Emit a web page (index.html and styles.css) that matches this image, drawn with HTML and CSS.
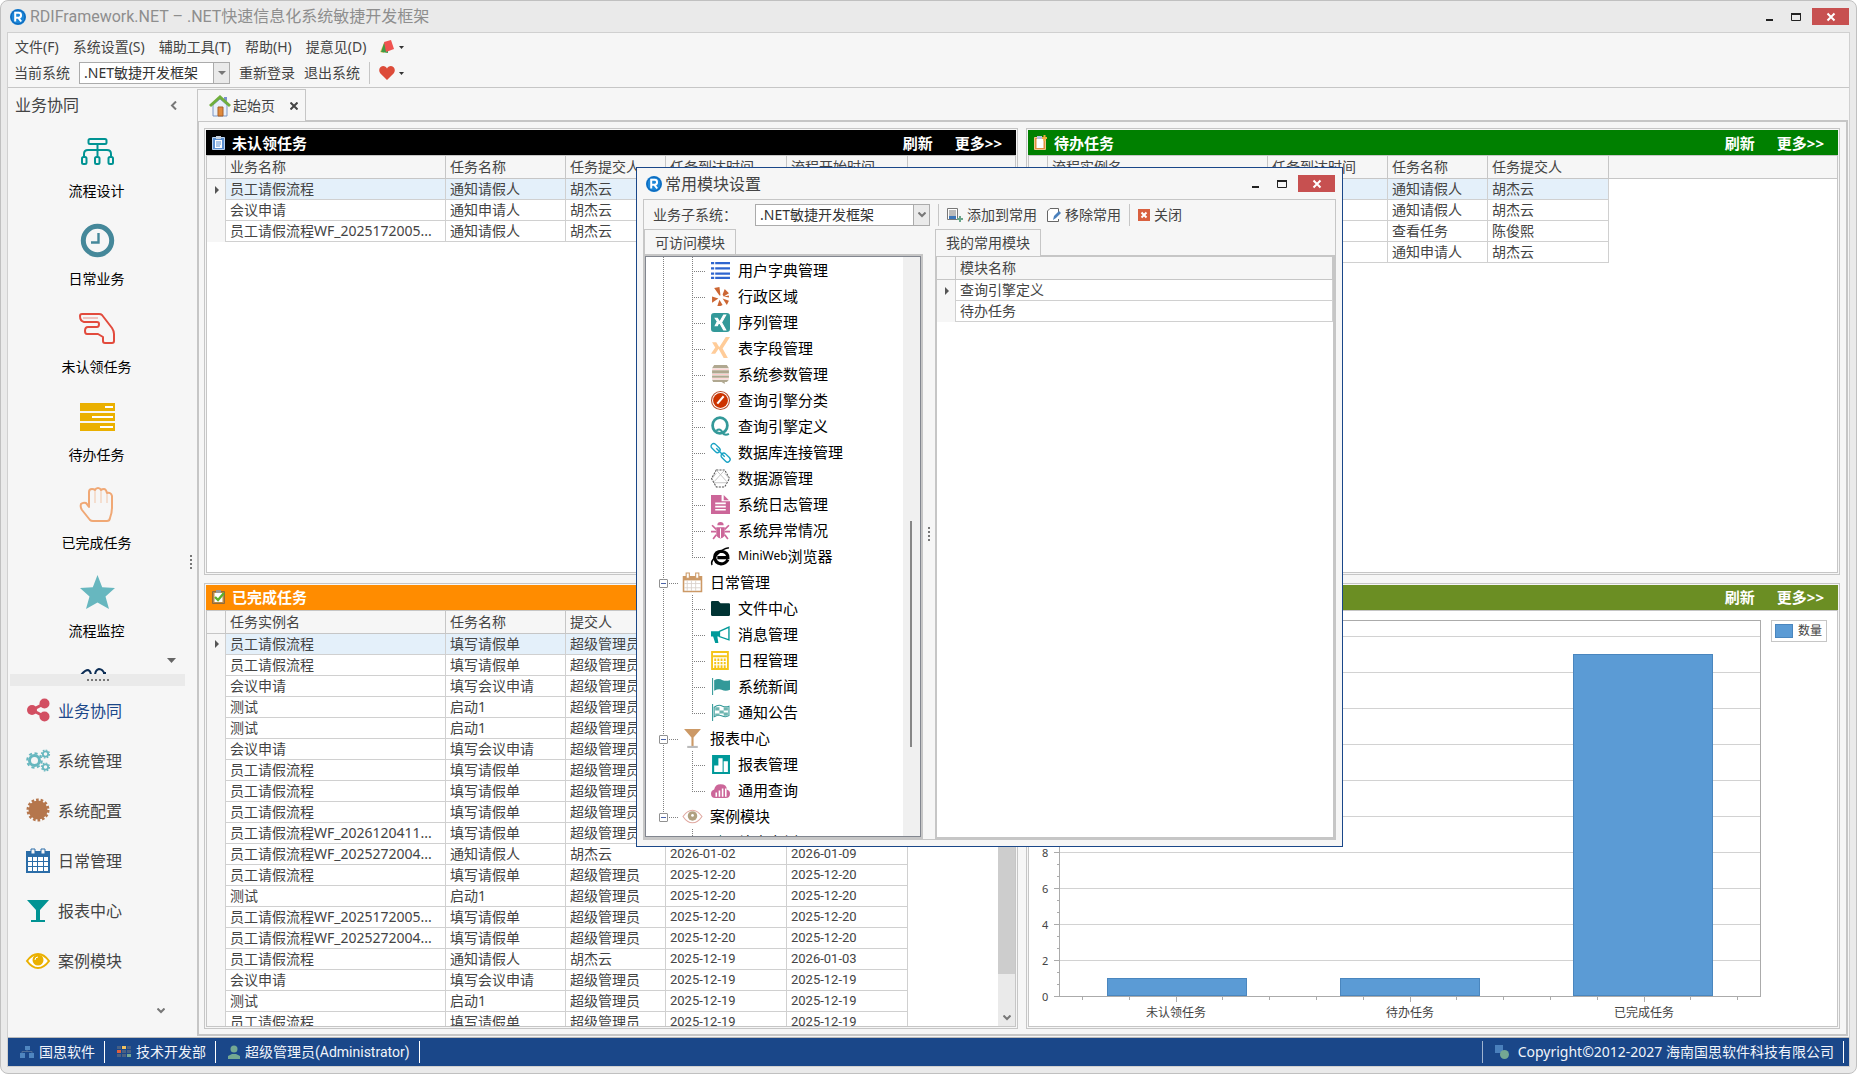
FILE: index.html
```html
<!DOCTYPE html>
<html lang="zh-CN">
<head>
  <meta charset="UTF-8">
  <meta name="viewport" content="width=device-width, initial-scale=1.0">
  <title>RDIFramework.NET</title>
  <link rel="stylesheet" href="styles.css">
</head>
<body>
  <div class="window">
    <header class="titlebar">
      <svg class="logo" viewBox="0 0 16 16"><circle cx="8" cy="8" r="8" fill="#1b86d8"/><circle cx="8" cy="8" r="7" fill="none" stroke="#0d62b4" stroke-width="1"/><path d="M5.2 12.5V3.8h3.4a2.4 2.4 0 0 1 0 4.9H5.2M8.2 8.7l3 3.8" fill="none" stroke="#fff" stroke-width="2"/></svg>
      <h1>RDIFramework.NET – .NET快速信息化系统敏捷开发框架</h1>
      <div class="win-buttons">
        <button aria-label="最小化"><svg viewBox="0 0 10 10"><path d="M1 7h7v2H1z" fill="#222"/></svg></button>
        <button aria-label="最大化"><svg viewBox="0 0 10 10"><path d="M.5 1.5h9v7h-9z" fill="none" stroke="#222"/><path d="M0 1h10v2H0z" fill="#222"/></svg></button>
        <button class="close" aria-label="关闭"><svg viewBox="0 0 10 10"><path d="M1.5 1.5l7 7M8.5 1.5l-7 7" stroke="#fff" stroke-width="2"/></svg></button>
      </div>
    </header>

    <div class="frame">
      <nav class="menubar">
        <button>文件(F)</button>
        <button>系统设置(S)</button>
        <button>辅助工具(T)</button>
        <button>帮助(H)</button>
        <button>提意见(D)</button>
        <button class="pick" aria-label="皮肤">
          <svg width="15" height="14" viewBox="0 0 15 14"><path d="M4 3L0 12l4 1z" fill="#f3c86a"/><path d="M4 3L1 12l7 1V4z" fill="#3f9b46"/><path d="M4 2l7-2 3 9-8 3z" fill="#ef5350"/></svg>
          <svg width="5" height="3" viewBox="0 0 5 3"><path d="M0 0h5L2.500 3z" fill="#333"/></svg>
        </button>
      </nav>
      <div class="toolbar">
        <label for="system">当前系统</label>
        <div class="combo combo-main">
          <select id="system"><option>.NET敏捷开发框架</option></select>
          <span class="combo-arrow"><svg width="8" height="4" viewBox="0 0 8 4"><path d="M0 0h8L4 4z" fill="#777"/></svg></span>
        </div>
        <button>重新登录</button>
        <button>退出系统</button>
        <span class="sep"></span>
        <button class="pick" aria-label="收藏">
          <svg width="16" height="14" viewBox="0 0 16 14"><path d="M8 14L1.200 7.300C-.8 4.800.2.200 4 0c2 0 3.300 1 4 2.400C8.700 1 10 0 12 0c3.800.2 4.800 4.800 2.800 7.300z" fill="#dd4b39"/></svg>
          <svg width="5" height="3" viewBox="0 0 5 3"><path d="M0 0h5L2.500 3z" fill="#333"/></svg>
        </button>
      </div>

      <div class="content">
        <aside class="sidebar">
          <div class="side-main">
            <div class="side-title">
              <span>业务协同</span>
              <button aria-label="收起"><svg width="7" height="9" viewBox="0 0 7 9"><path d="M6 .5l-4 4 4 4" fill="none" stroke="#777" stroke-width="2"/></svg></button>
            </div>
            <div class="side-list">
              <a href="#" class="side-item">
                <svg viewBox="0 0 34 34" fill="none" stroke="#009393" stroke-width="2"><rect x="8.500" y="4" width="18" height="5" rx="1.500"/><path d="M17.500 9v12M4 22v-3q0-4 4-4h19q4 0 4 4v3"/><rect x="2" y="22" width="4.500" height="7" rx="1.500"/><rect x="15" y="22" width="4.500" height="7" rx="1.500"/><rect x="28.500" y="22" width="4.500" height="7" rx="1.500"/></svg>
                <span>流程设计</span>
              </a>
              <a href="#" class="side-item">
                <svg viewBox="0 0 34 34" fill="none" stroke="#45889a"><circle cx="17.500" cy="17.500" r="14.200" stroke-width="5"/><path d="M18.500 10v9.500H11" stroke-width="2.400"/></svg>
                <span>日常业务</span>
              </a>
              <a href="#" class="side-item">
                <svg viewBox="0 0 34 34" fill="none" stroke="#e24b3d" stroke-width="2" stroke-linejoin="round"><path d="M2 3h17q2 0 3 1l10 13q2 3 2 6v7q0 2-2 2h-7q-2 0-2-2v-4l-5-3H7q-2 0-2-3 0-4 3-4h9q2 0 2-3 0-2-2-2H4Q0 10 0 5q0-2 2-2z"/><path d="M3 7h15" stroke-width="1" opacity=".6"/></svg>
                <span>未认领任务</span>
              </a>
              <a href="#" class="side-item">
                <svg viewBox="0 0 34 34" fill="#eab000"><path d="M0 4h35v8H0zM0 14h35v8H0zM0 24h35v8H0z"/><path d="M25 7h8v2h-8zM12 17h21v2H12zM20 27h13v2H20z" fill="#fff"/></svg>
                <span>待办任务</span>
              </a>
              <a href="#" class="side-item">
                <svg viewBox="0 0 34 34" fill="none" stroke="#f0a875" stroke-width="2" stroke-linejoin="round"><path d="M9 20V5q0-3 3-3 2 0 3 1 1-2 3-2t3 2q1-1 3-1 2 0 3 4 4-1 5 3v11q0 6-2 11-.5 3-3 3H13q-2 0-3-1L2 23q-2-3-1-6 2-2 5-1 1 1 3 4z"/><path d="M15 4v12M21 4v12M27 7v9" stroke-width="1" opacity=".6"/></svg>
                <span>已完成任务</span>
              </a>
              <a href="#" class="side-item">
                <svg viewBox="0 0 34 34" fill="#67b7bf"><path d="M17.500 0l4.700 12.200L35 13l-9.500 8.500L29 34l-11.500-6.500L6 34l3.500-12.500L0 13l12.800-.8z"/></svg>
                <span>流程监控</span>
              </a>
              <a href="#" class="side-item" aria-label="更多模块">
                <svg viewBox="0 0 34 34" fill="none" stroke="#0c2d55" stroke-width="2"><path d="M1 12q4-5 7-5 3 1 3 6v10M25 12q-2-6-6-6-4 1-4 7M23 10h3"/></svg>
              </a>
            </div>
            <div class="side-more"><svg width="9" height="5" viewBox="0 0 9 5"><path d="M0 0h9L4.500 5z" fill="#666"/></svg></div>
            <div class="side-split"></div>
            <div class="side-groups">
              <a href="#" class="group active">
                <svg viewBox="0 0 24 24" fill="#d24f62"><circle cx="6" cy="11" r="5"/><circle cx="18.500" cy="4.500" r="5"/><circle cx="18.500" cy="17.500" r="5"/><path d="M18.500 4.500L6 11l12.500 6.500" fill="none" stroke="#d24f62" stroke-width="3"/></svg>
                业务协同</a>
              <a href="#" class="group">
                <svg viewBox="0 0 24 24" fill="none" stroke="#67b7bf"><circle cx="8.500" cy="11.500" r="5" stroke-width="3"/><circle cx="8.500" cy="11.500" r="7.300" stroke-width="2" stroke-dasharray="3.100 2.600"/><circle cx="19.500" cy="5" r="2.700" stroke-width="1.800"/><circle cx="19.500" cy="5" r="4" stroke-width="1.200" stroke-dasharray="1.700 1.400"/><circle cx="19.500" cy="18" r="2.700" stroke-width="1.800"/><circle cx="19.500" cy="18" r="4" stroke-width="1.200" stroke-dasharray="1.700 1.400"/></svg>
                系统管理</a>
              <a href="#" class="group">
                <svg viewBox="0 0 24 24"><circle cx="12" cy="11" r="9.500" fill="#b5764c"/><circle cx="12" cy="11" r="10" fill="none" stroke="#b5764c" stroke-width="3" stroke-dasharray="2.600 1.890"/></svg>
                系统配置</a>
              <a href="#" class="group">
                <svg viewBox="0 0 24 24"><path d="M0 2h24v22H0z" fill="#2b6da8"/><path d="M2 8h4v4H2zM7 8h4v4H7zM12 8h5v4h-5zM18 8h4v4h-4zM2 13h4v4H2zM7 13h4v4H7zM12 13h5v4h-5zM18 13h4v4h-4zM2 18h4v4H2zM7 18h4v4H7zM12 18h5v4h-5zM18 18h4v4h-4z" fill="#fff"/><path d="M5 0h4v5H5zM15 0h4v5h-4z" fill="#f6f6f6" stroke="#2b6da8"/></svg>
                日常管理</a>
              <a href="#" class="group">
                <svg viewBox="0 0 24 24" fill="#009393"><path d="M1 1h22l-9 10v10h5v2H5v-2h5V11z"/></svg>
                报表中心</a>
              <a href="#" class="group">
                <svg viewBox="0 0 24 24"><path d="M1 12q5-7 11-7t11 7q-5 7-11 7T1 12z" fill="#fff" stroke="#eab000" stroke-width="2"/><circle cx="12" cy="11" r="5.500" fill="#eab000"/><path d="M9 11q0-3 3-3" fill="none" stroke="#fff"/></svg>
                案例模块</a>
            </div>
            <div class="side-foot"><svg width="8" height="6" viewBox="0 0 8 6"><path d="M.5.5L4 4 7.500.5" fill="none" stroke="#777" stroke-width="2"/></svg></div>
          </div>
          <div class="grip"></div>
        </aside>

        <main class="main">
          <div class="tabs">
            <div class="tab">
              <svg width="22" height="22" viewBox="0 0 22 22"><path d="M4 10v11h14V10l-7-6z" fill="#e8effa" stroke="#7d97c4"/><path d="M15 2h3v5h-3z" fill="#7b8fd0"/><path d="M1 11L11 2l10 9" fill="none" stroke="#6fae3c" stroke-width="3"/><path d="M9 12h5v9H9z" fill="#e08a3c" stroke="#a7602a"/></svg>
              <span>起始页</span>
              <button aria-label="关闭标签"><svg width="8" height="8" viewBox="0 0 8 8"><path d="M.5.5l7 7M7.500.5l-7 7" stroke="#444" stroke-width="2"/></svg></button>
            </div>
            <div class="tab-fill"></div>
          </div>

          <div class="board">
            <section class="panel">
              <div class="panel-head black">
                <svg width="13" height="16" viewBox="0 0 13 16"><path d="M.5 2.500h12v12H.5z" fill="#5b8fd0" stroke="#b9d2f0"/><path d="M3 5h7v8H3z" fill="#fff"/><path d="M4 1h5v3H4z" fill="#c8d2dd"/><path d="M4 7h5M4 9h5M4 11h4" stroke="#5b8fd0"/></svg>
                <h2>未认领任务</h2>
                <button>刷新</button><button>更多&gt;&gt;</button>
              </div>
              <div class="panel-body">
                <table class="grid">
                  <colgroup><col class="c-mark"><col class="c-name"><col class="c-step"><col class="c-user"><col class="c-date"><col class="c-date"><col></colgroup>
                  <thead><tr><th></th><th>业务名称</th><th>任务名称</th><th>任务提交人</th><th>任务到达时间</th><th>流程开始时间</th><th class="rest"></th></tr></thead>
                  <tbody>
                    <tr class="current"><td class="mark"></td><td>员工请假流程</td><td>通知请假人</td><td>胡杰云</td><td></td><td></td><td class="rest"></td></tr>
                    <tr><td class="mark"></td><td>会议申请</td><td>通知申请人</td><td>胡杰云</td><td></td><td></td><td class="rest"></td></tr>
                    <tr><td class="mark"></td><td>员工请假流程WF_2025172005...</td><td>通知请假人</td><td>胡杰云</td><td></td><td></td><td class="rest"></td></tr>
                  </tbody>
                </table>
              </div>
            </section>

            <section class="panel">
              <div class="panel-head green">
                <svg width="13" height="16" viewBox="0 0 13 16"><path d="M.5 2.500h11v12H.5z" fill="#e09040" stroke="#f3c58c"/><path d="M2.500 4h7v9h-7z" fill="#fff"/><path d="M3 1h5v3H3z" fill="#b8bfe0"/><path d="M10.500 0v6M8 3h5" stroke="#f0b040" stroke-width="2"/></svg>
                <h2>待办任务</h2>
                <button>刷新</button><button>更多&gt;&gt;</button>
              </div>
              <div class="panel-body">
                <table class="grid">
                  <colgroup><col class="c-mark"><col class="c-name"><col class="c-step"><col class="c-user"><col class="c-date"><col></colgroup>
                  <thead><tr><th></th><th>流程实例名</th><th>任务到达时间</th><th>任务名称</th><th>任务提交人</th><th class="rest"></th></tr></thead>
                  <tbody>
                    <tr class="current"><td class="mark"></td><td></td><td></td><td>通知请假人</td><td>胡杰云</td><td class="rest"></td></tr>
                    <tr><td class="mark"></td><td></td><td></td><td>通知请假人</td><td>胡杰云</td><td class="rest"></td></tr>
                    <tr><td class="mark"></td><td></td><td></td><td>查看任务</td><td>陈俊熙</td><td class="rest"></td></tr>
                    <tr><td class="mark"></td><td></td><td></td><td>通知申请人</td><td>胡杰云</td><td class="rest"></td></tr>
                  </tbody>
                </table>
              </div>
            </section>

            <section class="panel">
              <div class="panel-head orange">
                <svg width="13" height="16" viewBox="0 0 13 16"><path d="M.5 2.500h12v12H.5z" fill="#b98a4a" stroke="#8f6a3a"/><path d="M2.500 4h8v9h-8z" fill="#fff"/><path d="M4 1h5v3H4z" fill="#9a9a9a"/><path d="M3 8l3 3 6-7" fill="none" stroke="#5cb02c" stroke-width="2.400"/></svg>
                <h2>已完成任务</h2>
              </div>
              <div class="panel-body scrolled">
                <table class="grid">
                  <colgroup><col class="c-mark"><col class="c-name"><col class="c-step"><col class="c-user"><col class="c-date"><col class="c-date"><col></colgroup>
                  <thead><tr><th></th><th>任务实例名</th><th>任务名称</th><th>提交人</th><th></th><th></th><th class="rest"></th></tr></thead>
                  <tbody>
                    <tr class="current"><td class="mark"></td><td>员工请假流程</td><td>填写请假单</td><td>超级管理员</td><td></td><td></td><td class="rest"></td></tr>
                    <tr><td class="mark"></td><td>员工请假流程</td><td>填写请假单</td><td>超级管理员</td><td></td><td></td><td class="rest"></td></tr>
                    <tr><td class="mark"></td><td>会议申请</td><td>填写会议申请</td><td>超级管理员</td><td></td><td></td><td class="rest"></td></tr>
                    <tr><td class="mark"></td><td>测试</td><td>启动1</td><td>超级管理员</td><td></td><td></td><td class="rest"></td></tr>
                    <tr><td class="mark"></td><td>测试</td><td>启动1</td><td>超级管理员</td><td></td><td></td><td class="rest"></td></tr>
                    <tr><td class="mark"></td><td>会议申请</td><td>填写会议申请</td><td>超级管理员</td><td></td><td></td><td class="rest"></td></tr>
                    <tr><td class="mark"></td><td>员工请假流程</td><td>填写请假单</td><td>超级管理员</td><td></td><td></td><td class="rest"></td></tr>
                    <tr><td class="mark"></td><td>员工请假流程</td><td>填写请假单</td><td>超级管理员</td><td></td><td></td><td class="rest"></td></tr>
                    <tr><td class="mark"></td><td>员工请假流程</td><td>填写请假单</td><td>超级管理员</td><td></td><td></td><td class="rest"></td></tr>
                    <tr><td class="mark"></td><td>员工请假流程WF_2026120411...</td><td>填写请假单</td><td>超级管理员</td><td></td><td></td><td class="rest"></td></tr>
                    <tr><td class="mark"></td><td>员工请假流程WF_2025272004...</td><td>通知请假人</td><td>胡杰云</td><td class="date">2026-01-02</td><td class="date">2026-01-09</td><td class="rest"></td></tr>
                    <tr><td class="mark"></td><td>员工请假流程</td><td>填写请假单</td><td>超级管理员</td><td class="date">2025-12-20</td><td class="date">2025-12-20</td><td class="rest"></td></tr>
                    <tr><td class="mark"></td><td>测试</td><td>启动1</td><td>超级管理员</td><td class="date">2025-12-20</td><td class="date">2025-12-20</td><td class="rest"></td></tr>
                    <tr><td class="mark"></td><td>员工请假流程WF_2025172005...</td><td>填写请假单</td><td>超级管理员</td><td class="date">2025-12-20</td><td class="date">2025-12-20</td><td class="rest"></td></tr>
                    <tr><td class="mark"></td><td>员工请假流程WF_2025272004...</td><td>填写请假单</td><td>超级管理员</td><td class="date">2025-12-20</td><td class="date">2025-12-20</td><td class="rest"></td></tr>
                    <tr><td class="mark"></td><td>员工请假流程</td><td>通知请假人</td><td>胡杰云</td><td class="date">2025-12-19</td><td class="date">2026-01-03</td><td class="rest"></td></tr>
                    <tr><td class="mark"></td><td>会议申请</td><td>填写会议申请</td><td>超级管理员</td><td class="date">2025-12-19</td><td class="date">2025-12-19</td><td class="rest"></td></tr>
                    <tr><td class="mark"></td><td>测试</td><td>启动1</td><td>超级管理员</td><td class="date">2025-12-19</td><td class="date">2025-12-19</td><td class="rest"></td></tr>
                    <tr><td class="mark"></td><td>员工请假流程</td><td>填写请假单</td><td>超级管理员</td><td class="date">2025-12-19</td><td class="date">2025-12-19</td><td class="rest"></td></tr>
                  </tbody>
                </table>
                <div class="scrollbar">
                  <div class="thumb"></div>
                  <svg width="8" height="6" viewBox="0 0 8 6"><path d="M.5.5L4 4 7.500.5" fill="none" stroke="#777" stroke-width="2"/></svg>
                </div>
              </div>
            </section>

            <section class="panel">
              <div class="panel-head olive">
                <h2></h2>
                <button>刷新</button><button>更多&gt;&gt;</button>
              </div>
              <div class="panel-body chart">
                <div class="y-axis">
                  <span>8</span><span>6</span><span>4</span><span>2</span><span>0</span>
                </div>
                <div class="y-ticks"></div>
                <div class="plot-wrap">
                  <div class="plot">
                    <div class="slot"><div class="bar" style="height: 18px"></div></div>
                    <div class="slot"><div class="bar" style="height: 18px"></div></div>
                    <div class="slot"><div class="bar" style="height: 342px"></div></div>
                  </div>
                  <div class="x-axis">
                    <span>未认领任务</span>
                    <span>待办任务</span>
                    <span>已完成任务</span>
                  </div>
                </div>
                <div class="legend"><i></i>数量</div>
              </div>
            </section>
          </div>
        </main>
      </div>

      <footer class="status">
        <div class="cell"><svg width="14" height="12" viewBox="0 0 14 12"><path d="M5 0h5v4H5zM0 7h5v5H0zM9 7h5v5H9z" fill="#4f86c0"/><path d="M7 4v2M2 7V5.500h10V7" fill="none" stroke="#4f6f98"/></svg>国思软件</div>
        <div class="cell"><svg width="14" height="12" viewBox="0 0 14 12"><path d="M0 0h4v3H0zM10 0h4v3h-4zM5 4h4v3H5zM10 4h4v3h-4zM0 8h4v3H0zM5 8h4v3H5z" fill="#4a6183"/><path d="M5 0h4v3H5z" fill="#f0c060"/><path d="M0 4h4v3H0z" fill="#e0603c"/><path d="M10 8h4v3h-4z" fill="#78a890"/></svg>技术开发部</div>
        <div class="cell"><svg width="12" height="14" viewBox="0 0 12 14"><circle cx="6" cy="4" r="3.500" fill="#74a893"/><path d="M0 14v-3l4-2h4l4 2v3z" fill="#74a893"/></svg><span class="user">超级管理员(Administrator)</span></div>
        <div class="cell copy"><svg width="14" height="14" viewBox="0 0 14 14"><path d="M0 0h8v8H0z" fill="#4a80bc"/><circle cx="9.500" cy="9.500" r="4.500" fill="#74a893"/></svg>Copyright©2012-2027 海南国思软件科技有限公司</div>
      </footer>
    </div>
  </div>

  <div class="dialog" role="dialog" aria-labelledby="dialog-title">
    <div class="dialog-title">
      <svg class="logo" viewBox="0 0 16 16"><circle cx="8" cy="8" r="8" fill="#1b86d8"/><circle cx="8" cy="8" r="7" fill="none" stroke="#0d62b4" stroke-width="1"/><path d="M5.2 12.5V3.8h3.4a2.4 2.4 0 0 1 0 4.9H5.2M8.2 8.7l3 3.8" fill="none" stroke="#fff" stroke-width="2"/></svg>
      <h2 id="dialog-title">常用模块设置</h2>
      <div class="win-buttons">
        <button aria-label="最小化"><svg viewBox="0 0 10 10"><path d="M1 7h7v2H1z" fill="#222"/></svg></button>
        <button aria-label="最大化"><svg viewBox="0 0 10 10"><path d="M.5 1.5h9v7h-9z" fill="none" stroke="#222"/><path d="M0 1h10v2H0z" fill="#222"/></svg></button>
        <button class="close" aria-label="关闭"><svg viewBox="0 0 10 10"><path d="M1.5 1.5l7 7M8.5 1.5l-7 7" stroke="#fff" stroke-width="2"/></svg></button>
      </div>
    </div>
    <div class="dialog-body">
      <div class="dialog-tools">
        <label for="subsystem">业务子系统：</label>
        <div class="combo">
          <select id="subsystem"><option>.NET敏捷开发框架</option></select>
          <span class="combo-arrow"><svg width="8" height="6" viewBox="0 0 8 6"><path d="M.5.5L4 4 7.500.5" fill="none" stroke="#777" stroke-width="2"/></svg></span>
        </div>
        <span class="sep"></span>
        <button><svg width="16" height="14" viewBox="0 0 16 14"><path d="M.5.500h10v11H.5z" fill="#fff" stroke="#777"/><path d="M2 3h7M2 5h7M2 7h7" stroke="#777"/><path d="M2 8h7v3H2z" fill="#3d76b8"/><path d="M13 8v6M10 11h6" stroke="#6aa58b" stroke-width="2"/></svg>添加到常用</button>
        <button><svg width="14" height="14" viewBox="0 0 14 14"><path d="M11.500 7V.5H3L.5 3v10.500h11V11" fill="#fff" stroke="#666"/><path d="M6 12l1-4 5-5 2 2-5 5z" fill="#4a80bc"/></svg>移除常用</button>
        <span class="sep"></span>
        <button><svg width="12" height="12" viewBox="0 0 12 12"><path d="M0 0h12v12H0z" fill="#d9603f"/><path d="M3.500 3.500l5 5M8.500 3.500l-5 5" stroke="#fff" stroke-width="2"/></svg>关闭</button>
      </div>
      <div class="dialog-panes">
        <div class="pane pane-left">
          <div class="pane-tabs"><span>可访问模块</span></div>
          <div class="tree-box">
            <ul class="tree">
              <li><i class="line"></i><i class="branch"></i><svg viewBox="0 0 18 18" fill="#2f66cf"><path d="M0 1h3v2H0zM4 1h14v2H4zM0 6h3v2H0zM4 6h14v2H4zM0 11h3v2H0zM4 11h14v2H4zM0 15h3v2H0zM4 15h14v2H4z"/></svg>用户字典管理</li>
              <li><i class="line"></i><i class="branch"></i><svg viewBox="0 0 18 18" fill="#cc6633"><path d="M3 1l5-1 1 8-1 0zM11 7l2-5 4 4-5 3zM1 9l6 2-6 4zM6 18l2-6 3 5-2 1zM11 11l6 2-2 4zM12 9l5-1v2z"/></svg>行政区域</li>
              <li><i class="line"></i><i class="branch"></i><svg viewBox="0 0 18 18"><rect width="18" height="18" rx="3" fill="#339999"/><path d="M4 5h2l2 3-2 4H4l2-4zM12 2h2l-4 7 4 7h-2L8 9z" fill="#fff" stroke="#fff"/></svg>序列管理</li>
              <li><i class="line"></i><i class="branch"></i><svg viewBox="0 0 18 18" fill="#ffcc99"><path d="M1 3h4l3 5-4 6H0l4-6zM14-2h4l-7 11 5 9h-4L7 9z"/></svg>表字段管理</li>
              <li><i class="line"></i><i class="branch"></i><svg viewBox="0 0 18 18"><path d="M3 0h12l2 3H1zM1 5h16v3H1zM1 10h16v2H1zM1 14h16l-2 2h-2v2l-3-2H2z" fill="#b0a890"/><path d="M1 4h16M1 9h16M1 13h16" stroke="#ffcccc"/></svg>系统参数管理</li>
              <li><i class="line"></i><i class="branch"></i><svg viewBox="0 0 18 18"><circle cx="9" cy="9" r="8.500" fill="#fff" stroke="#b84c2a"/><circle cx="9" cy="9" r="7" fill="#cc3300"/><path d="M6 12l6-7" stroke="#fff" stroke-width="2"/></svg>查询引擎分类</li>
              <li><i class="line"></i><i class="branch"></i><svg viewBox="0 0 18 18" fill="none" stroke="#339999"><ellipse cx="8.500" cy="8" rx="7" ry="7.500" stroke-width="2.600"/><path d="M5 13q4-3 6 2 2 3 6 1" stroke-width="2"/></svg>查询引擎定义</li>
              <li><i class="line"></i><i class="branch"></i><svg viewBox="0 0 18 18" fill="none" stroke="#1aa3c4" stroke-width="1.300"><rect x="-1" y="-2.500" width="10" height="5" rx="2.500" transform="translate(1.500 2) rotate(45)"/><rect x="-1" y="-2.500" width="10" height="5" rx="2.500" transform="translate(11 11) rotate(45)"/><path d="M5 5l8 8"/></svg>数据库连接管理</li>
              <li><i class="line"></i><i class="branch"></i><svg viewBox="0 0 18 18" fill="none" stroke="#555"><path d="M5 1h8l4.500 8-4.500 8H5L.5 9z" stroke-dasharray="2 1"/><path d="M5 1l10 11M13 1L3 12M3 13h12M1 9l4-5M17 9l-4-5" stroke="#bbb" stroke-width=".8"/></svg>数据源管理</li>
              <li><i class="line"></i><i class="branch"></i><svg viewBox="0 0 18 18"><path d="M0 0h10v6h8v12H0z" fill="#cc6699"/><path d="M12 0l5 5h-5z" fill="#cc6699"/><path d="M4 8h10M4 11h10M4 14h10" stroke="#fff" stroke-width="1.600"/></svg>系统日志管理</li>
              <li><i class="line"></i><i class="branch"></i><svg viewBox="0 0 18 18"><path d="M6 4q0-3 3-3t3 3zM5 6h8v8q-4 5-8 0z" fill="#cc6699"/><path d="M5 8L1 4M13 8l4-4M5 10H0M13 10h5M5 13l-3 4M13 13l3 4" stroke="#cc6699" stroke-width="1.600"/><path d="M9 7v9" stroke="#fff"/></svg>系统异常情况</li>
              <li><i class="line"></i><i class="branch last"></i><svg viewBox="0 0 18 18" fill="none" stroke="#000"><path d="M16 12q-2 4-6.500 4-6-1-6-6.500Q4 4 10 4q6 1 6 6H6" stroke-width="3"/><path d="M1 17q-2-3 5-10 7-7 11-6" stroke-width="1.500"/></svg><span class="latin">MiniWeb</span>浏览器</li>
              <li class="parent"><i class="node"><b></b></i><svg viewBox="0 0 18 18"><path d="M.5 3.500h17v14H.5z" fill="#fff" stroke="#cc9966" stroke-width="1.500"/><path d="M0 3h18v4H0z" fill="#cc9966"/><path d="M4 7v10M8 7v10M12 7v10M1 10h16M1 14h16" stroke="#d8d0c8" stroke-width=".8"/><path d="M3 0h3v5H3zM12 0h3v5h-3z" fill="#fff" stroke="#cc9966"/></svg>日常管理</li>
              <li><i class="line"></i><i class="branch"></i><svg viewBox="0 0 18 18"><path d="M0 3q0-1 1-1h6l2 2h8q1 0 1 1v10q0 1-1 1H1q-1 0-1-1z" fill="#003333"/></svg>文件中心</li>
              <li><i class="line"></i><i class="branch"></i><svg viewBox="0 0 18 18"><path d="M0 6h8v5H6l1 6H4L2 11H0z" fill="#009999"/><path d="M8 6l9-4v12l-9-3z" fill="#fff" stroke="#009999" stroke-width="1.300"/></svg>消息管理</li>
              <li><i class="line"></i><i class="branch"></i><svg viewBox="0 0 18 18"><path d="M1 1h15v16H1z" fill="#fff" stroke="#f5c518" stroke-width="1.800"/><path d="M2 5h13M4 7v9M7 7v9M10 7v9M13 7v9" stroke="#f5c518" stroke-width="1.800"/><path d="M2 10h13M2 13h13" stroke="#fff"/></svg>日程管理</li>
              <li><i class="line"></i><i class="branch"></i><svg viewBox="0 0 18 18"><path d="M1.500 1v16" stroke="#339999"/><path d="M3 3q4-2 8 0 3 1 7 0v9q-4 2-8 0-3-1-7 1z" fill="#339999"/></svg>系统新闻</li>
              <li><i class="line"></i><i class="branch last"></i><svg viewBox="0 0 18 18"><path d="M1.500 1v16" stroke="#339999"/><path d="M3 4q4-3 8-1 3 1 6 0v9q-3 2-7 0-3-1-7 1z" fill="#fff" stroke="#339999"/><path d="M4 4h4v3H4zM12 4h4v3h-4zM8 7h4v3H8zM4 10h4v2H4zM12 9h4v3h-4z" fill="#6fb5b0"/></svg>通知公告</li>
              <li class="parent"><i class="node"><b></b></i><svg viewBox="0 0 18 18"><path d="M1 0h16l-7 8v8H8V8z" fill="#cc9966"/><path d="M4 17h10" stroke="#bbb" stroke-width="2"/></svg>报表中心</li>
              <li><i class="line"></i><i class="branch"></i><svg viewBox="0 0 18 18"><path d="M1 0h17v18H1z" fill="#009999"/><path d="M3 10h4v6H3zM7 3h4v13H7zM12 6h4v10h-4z" fill="#fff"/></svg>报表管理</li>
              <li><i class="line"></i><i class="branch last"></i><svg viewBox="0 0 18 18"><path d="M4 16q-4 0-4-4 0-3 3-4 1-5 6-5 6 0 6 5 3 1 3 4 0 4-4 4z" fill="#cc6699"/><path d="M5 15v-4M8 15V9M11 15V7M14 15V7" stroke="#fff" stroke-width="1.500"/></svg>通用查询</li>
              <li class="parent end"><i class="node"><b></b></i><svg viewBox="0 0 18 18"><path d="M0 9q4-6 9-6t9 6q-4 6-9 6T0 9z" fill="#fff" stroke="#e0a8a0"/><circle cx="9" cy="8.500" r="4.500" fill="#b0a080"/><circle cx="9" cy="8" r="1.300" fill="#fff"/></svg>案例模块</li>
              <li><i class="line none"></i><i class="branch"></i><svg viewBox="0 0 18 18"><path d="M9 2l7 7H2z" fill="#006666"/></svg>综合案例展示</li>
            </ul>
            <div class="tree-scroll"><div class="tree-thumb"></div></div>
          </div>
        </div>
        <div class="pane-grip"><div class="grip"></div></div>
        <div class="pane pane-right">
          <div class="pane-tabs"><span>我的常用模块</span></div>
          <div class="list-box">
            <table class="grid">
              <colgroup><col class="c-mark"><col></colgroup>
              <thead><tr><th></th><th>模块名称</th></tr></thead>
              <tbody>
                <tr class="focus"><td class="mark"></td><td>查询引擎定义</td></tr>
                <tr><td class="mark"></td><td>待办任务</td></tr>
              </tbody>
            </table>
          </div>
        </div>
      </div>
    </div>
  </div>
</body>
</html>
```
FILE: styles.css
```css
* {
  box-sizing: border-box;
}

body {
  margin: 0;
  background: #fff;
  color: #444;
  font-family: "Noto Sans", "Noto Sans CJK SC", sans-serif;
  font-size: 14px;
  line-height: 20px;
}

button {
  display: flex;
  align-items: center;
  padding: 0;
  border: none;
  background: none;
  color: inherit;
  font: inherit;
  cursor: pointer;
}

a {
  color: inherit;
  text-decoration: none;
}

h1, h2 {
  margin: 0;
  font-size: 16px;
  font-weight: normal;
  line-height: 24px;
}

svg {
  display: block;
  flex: none;
}

/* window shell */
.window {
  display: flex;
  flex-direction: column;
  height: 100vh;
  padding: 0 6px 6px;
  border: 1px solid #c0c0c0;
  border-radius: 8px;
  background: #eaeaea;
}

.titlebar {
  display: flex;
  align-items: center;
  height: 31px;
  flex: none;
  padding: 0 1px 0 3px;
}

.titlebar h1 {
  margin-left: 4px;
  flex: 1;
  color: #8e8e8e;
  font-family: Roboto, "Noto Sans CJK SC", sans-serif;
}

.logo {
  width: 16px;
  height: 16px;
}

.win-buttons {
  display: flex;
  gap: 6px;
}

.win-buttons button {
  justify-content: center;
  width: 20px;
  height: 17px;
}

.win-buttons svg {
  width: 10px;
  height: 10px;
}

.win-buttons .close {
  width: 37px;
  background: #c75050;
}

.frame {
  display: flex;
  flex-direction: column;
  flex: 1;
  min-height: 0;
  border: 1px solid #d0d0d0;
  background: #f6f6f6;
}

.menubar,
.toolbar {
  display: flex;
  align-items: center;
  flex: none;
}

.menubar {
  gap: 14px;
  height: 28px;
  padding-left: 7px;
}

.toolbar {
  gap: 9px;
  height: 27px;
  padding: 0 0 2px 6px;
  border-bottom: 1px solid #c6c6c6;
}

.pick {
  gap: 4px;
}

.sep {
  width: 1px;
  height: 22px;
  background: #c6c6c6;
}

.combo {
  display: flex;
  height: 22px;
  border: 1px solid #ababab;
  background: #fff;
}

.combo-main {
  width: 151px;
}

.combo select {
  flex: 1;
  min-width: 0;
  padding: 0 4px;
  border: none;
  outline: none;
  appearance: none;
  background: none;
  color: #333;
  font: inherit;
}

.combo-arrow {
  display: flex;
  align-items: center;
  justify-content: center;
  width: 16px;
  border-left: 1px solid #ababab;
  background: #eaeaea;
}

.content {
  display: flex;
  flex: 1;
  min-height: 0;
  padding: 0 1px 1px 0;
  border-bottom: 1px solid #bbb;
}

/* sidebar */
.sidebar {
  display: flex;
  width: 189px;
  flex: none;
}

.side-main {
  display: flex;
  flex-direction: column;
  width: 177px;
  color: #444;
  font-size: 16px;
}

.side-title {
  display: flex;
  align-items: center;
  justify-content: space-between;
  height: 34px;
  flex: none;
  padding: 0 8px 0 7px;
}

.side-list {
  flex: 1;
  min-height: 0;
  overflow: hidden;
  padding-top: 6px;
}

.side-item {
  display: flex;
  flex-direction: column;
  align-items: center;
  gap: 12px;
  height: 88px;
  padding-top: 7px;
  color: #000;
  font-size: 14px;
}

.side-item svg {
  width: 34px;
  height: 34px;
  overflow: visible;
}

.side-more {
  align-self: flex-end;
  height: 0;
  margin-right: 9px;
}

.side-more svg {
  position: relative;
  top: -16px;
}

.side-split {
  height: 12px;
  flex: none;
  margin-left: 2px;
  background: repeating-linear-gradient(90deg, #777 0 2px, #eaeaea 2px 4px) center / 22px 2px no-repeat, #eaeaea;
}

.side-groups {
  flex: none;
}

.group {
  display: flex;
  align-items: center;
  gap: 8px;
  height: 50px;
  padding-left: 18px;
}

.group svg {
  width: 24px;
  height: 24px;
  overflow: visible;
}

.group.active {
  color: #1a4789;
}

.side-foot {
  display: flex;
  align-items: center;
  justify-content: flex-end;
  height: 50px;
  flex: none;
  padding-right: 20px;
}

.grip {
  align-self: center;
  width: 2px;
  height: 14px;
  margin: 0 auto;
  background: repeating-linear-gradient(#777 0 2px, transparent 2px 4px);
}

/* document area */
.main {
  display: flex;
  flex-direction: column;
  flex: 1;
  min-width: 0;
}

.tabs {
  display: flex;
  height: 33px;
  flex: none;
}

.tab {
  display: flex;
  align-items: center;
  width: 109px;
  margin-top: 1px;
  padding-left: 11px;
  border: 1px solid #c6c6c6;
  border-bottom: none;
}

.tab span {
  margin: 0 15px 0 2px;
}

.tab-fill {
  flex: 1;
  border-bottom: 1px solid #c6c6c6;
}

.board {
  display: grid;
  grid-template-columns: 1fr 1fr;
  grid-template-rows: 1fr 1fr;
  gap: 8px;
  flex: 1;
  min-height: 0;
  padding: 6px 6px 5px 5px;
  border: 2px solid #c6c6c6;
  border-top-width: 1px;
}

.panel {
  display: flex;
  flex-direction: column;
  min-width: 0;
  min-height: 0;
  padding: 1px;
  border: 1px solid #c6c6c6;
}

.panel-head {
  display: flex;
  align-items: center;
  height: 25px;
  flex: none;
  padding: 0 14px 0 6px;
  color: #fff;
  font-size: 15px;
  font-weight: bold;
}

.panel-head h2 {
  flex: 1;
  margin-left: 7px;
  font-size: 15px;
  font-weight: bold;
}

.panel-head button + button {
  margin-left: 22px;
}

.black { background: #000; }
.green { background: #008000; }
.orange { background: #ff8c00; }
.olive { background: #6b8e23; }

.panel-body {
  flex: 1;
  min-height: 0;
  overflow: hidden;
  border: 1px solid #c6c6c6;
  border-top: none;
  background: #fff;
}

/* data grid */
.grid {
  width: 100%;
  table-layout: fixed;
  border-spacing: 0;
}

.c-mark { width: 19px; }
.c-name { width: 220px; }
.c-step { width: 120px; }
.c-user { width: 100px; }
.c-date { width: 121px; }

.grid th,
.grid td {
  height: 21px;
  padding: 0 4px;
  overflow: hidden;
  border-right: 1px solid #d0d0d0;
  border-bottom: 1px solid #d0d0d0;
  font-weight: normal;
  text-align: left;
  white-space: nowrap;
}

.grid th {
  height: 24px;
  border-color: #c6c6c6;
  border-top: 1px solid #c6c6c6;
  background: #f6f6f6;
}

.grid th.rest {
  border-right: none;
}

.grid td.rest {
  border: none;
  background: none;
}

.grid .current td {
  background-color: #e4f0fa;
}

.grid .current td.rest {
  background: none;
}

.grid td.mark,
.grid .current td.mark {
  border-bottom: none;
  background-color: #f6f6f6;
}

.current .mark::before,
.focus .mark::before {
  content: "";
  display: block;
  margin-left: 4px;
  width: 0;
  border: 4px solid transparent;
  border-left-color: #555;
  border-right: none;
}

.grid .date {
  font-family: Roboto, sans-serif;
  font-size: 13px;
}

.scrolled {
  display: flex;
  align-items: flex-start;
}

.scrolled .grid {
  flex: 1;
}

.scrollbar {
  display: flex;
  flex-direction: column;
  align-items: center;
  align-self: stretch;
  width: 17px;
  flex: none;
  padding-bottom: 5px;
  background: #eaeaea;
}

.thumb {
  align-self: stretch;
  flex: 1;
  margin-bottom: 41px;
  background: #cdcdcd;
}

/* chart */
.chart {
  display: flex;
  padding: 9px 10px 0 13px;
  border-top: 1px solid #c6c6c6;
  font-size: 12px;
}

.y-axis {
  display: flex;
  flex-direction: column;
  justify-content: flex-end;
  width: 6px;
  margin-bottom: 21px;
  font-size: 11px;
  line-height: 36px;
  text-align: right;
}

.y-axis span:last-child {
  height: 26px;
}

.y-ticks {
  width: 5px;
  margin: 0 0 29px 6px;
  background:
    repeating-linear-gradient(to top, #ababab 0 1px, transparent 1px 36px),
    repeating-linear-gradient(to top, #ababab 0 1px, transparent 1px 12px) right / 2px 100% no-repeat;
}

.plot-wrap {
  display: flex;
  flex-direction: column;
  flex: 1;
}

.plot {
  display: flex;
  flex: 1;
  border: 1px solid #ababab;
  background: repeating-linear-gradient(to top, transparent 0 35px, #d2d2d2 35px 36px);
}

.slot {
  display: flex;
  align-items: flex-end;
  justify-content: center;
  flex: 1;
}

.bar {
  width: 60%;
  border: 1px solid #4a86be;
  background: #5b9bd5;
}

.x-axis {
  display: flex;
  height: 29px;
}

.x-axis span {
  flex: 1;
  padding-top: 6px;
  background:
    linear-gradient(#ababab 0 0) 10% 0 / 1px 3px no-repeat,
    linear-gradient(#ababab 0 0) 30% 0 / 1px 3px no-repeat,
    linear-gradient(#ababab 0 0) 50% 0 / 1px 5px no-repeat,
    linear-gradient(#ababab 0 0) 70% 0 / 1px 3px no-repeat,
    linear-gradient(#ababab 0 0) 90% 0 / 1px 3px no-repeat;
  text-align: center;
}

.legend {
  display: flex;
  align-items: center;
  gap: 5px;
  width: 56px;
  height: 22px;
  margin-left: 10px;
  padding-left: 3px;
  border: 1px solid #c6c6c6;
  white-space: nowrap;
}

.legend i {
  width: 18px;
  height: 14px;
  border: 1px solid #4a86be;
  background: #5b9bd5;
}

/* status bar */
.status {
  display: flex;
  align-items: center;
  height: 28px;
  flex: none;
  padding: 0 5px 0 0;
  background: #1a4789;
  color: #f0f4fa;
}

.status .cell {
  display: flex;
  align-items: center;
  gap: 5px;
  height: 22px;
  padding: 0 9px 0 12px;
  border-right: 1px solid #fff;
}

.status .user {
  font-family: Roboto, "Noto Sans CJK SC", sans-serif;
}

.status .copy {
  gap: 9px;
  margin-left: auto;
  border-left: 1px solid #9fb4d0;
}

/* module dialog */
.dialog {
  position: absolute;
  left: 636px;
  top: 167px;
  display: flex;
  flex-direction: column;
  width: 707px;
  height: 680px;
  padding: 0 6px 6px;
  border: 1px solid #1a4789;
  background: #f6f6f6;
}

.dialog-title {
  display: flex;
  align-items: center;
  height: 31px;
  flex: none;
  padding: 0 1px 0 3px;
}

.dialog-title h2 {
  flex: 1;
  margin-left: 3px;
}

.dialog-body {
  display: flex;
  flex-direction: column;
  flex: 1;
  min-height: 0;
  border: 1px solid #c6c6c6;
}

.dialog-tools {
  display: flex;
  align-items: center;
  gap: 10px;
  height: 29px;
  flex: none;
  padding-left: 9px;
}

.dialog-tools label {
  width: 92px;
}

.dialog-tools .combo {
  width: 175px;
}

.dialog-tools .sep {
  margin: 0 -2px;
}

.dialog-tools button {
  gap: 4px;
}

.dialog-panes {
  display: flex;
  flex: 1;
  min-height: 0;
}

.pane {
  display: flex;
  flex-direction: column;
  min-width: 0;
}

.pane-left {
  width: 279px;
  flex: none;
}

.pane-right {
  flex: 1;
}

.pane-grip {
  display: flex;
  width: 12px;
}

.pane-tabs {
  display: flex;
  height: 27px;
  flex: none;
}

.pane-tabs span {
  padding: 3px 10px;
  border: 1px solid #c6c6c6;
  border-bottom: none;
}

.pane-tabs::after {
  content: "";
  flex: 1;
  border-bottom: 1px solid #c6c6c6;
}

.tree-box {
  display: flex;
  flex: 1;
  min-height: 0;
  margin: 0 2px 2px 1px;
  border: 1px solid #82868f;
  outline: 2px solid #c6c6c6;
  background: #fff;
}

.list-box {
  flex: 1;
  border: 2px solid #c6c6c6;
  border-top: none;
  background: #fff;
}

/* module tree */
.tree {
  flex: 1;
  margin: 0;
  padding: 0;
  overflow: hidden;
  list-style: none;
  color: #000;
  font-size: 15px;
}

.tree li {
  display: flex;
  align-items: center;
  height: 26px;
  padding-left: 17px;
}

.tree svg {
  width: 19px;
  height: 19px;
  margin: 0 8px 0 5px;
  overflow: visible;
}

.tree .latin {
  font-size: 12px;
}

.line,
.branch,
.node {
  height: 26px;
  background: repeating-linear-gradient(#808080 0 1px, transparent 1px 2px) 0 0 / 1px 100% no-repeat;
}

.line {
  width: 29px;
}

.line.none {
  background: none;
}

.branch {
  width: 14px;
}

.branch,
.node {
  background:
    repeating-linear-gradient(#808080 0 1px, transparent 1px 2px) 0 0 / 1px 100% no-repeat,
    repeating-linear-gradient(90deg, #808080 0 1px, transparent 1px 2px) 0 14px / 100% 1px no-repeat;
}

.branch.last,
.end .node {
  background-size: 1px 14px, 100% 1px;
}

.node {
  width: 15px;
}

.node b {
  display: block;
  width: 9px;
  height: 9px;
  margin: 10px 0 0 -4px;
  border: 1px solid #919191;
  border-radius: 1px;
  background: linear-gradient(#4b63a7 0 0) center / 5px 1px no-repeat, #fff;
}

.tree-scroll {
  width: 17px;
  padding: 264px 8px 0 7px;
  background: #f0f0f0;
}

.tree-thumb {
  height: 226px;
  background: #868686;
}
```
